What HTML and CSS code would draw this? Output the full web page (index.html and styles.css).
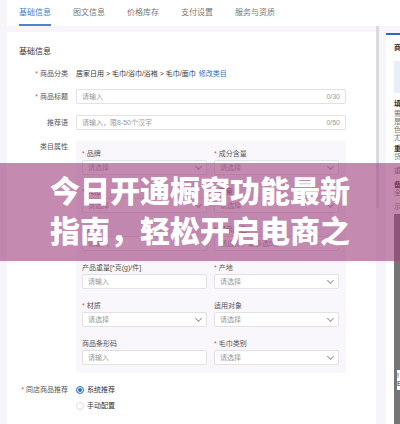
FILE: index.html
```html
<!DOCTYPE html>
<html lang="zh-CN">

<head>
    <meta charset="UTF-8">
    <meta name="viewport" content="width=device-width, initial-scale=1.0">
    <title>基础信息</title>
    <link rel="stylesheet" href="styles.css">
</head>

<body>

    <nav class="tabs">
        <a href="#basic" class="active">基础信息</a>
        <a href="#detail">图文信息</a>
        <a href="#stock">价格库存</a>
        <a href="#payment">支付设置</a>
        <a href="#service">服务与资质</a>
    </nav>

    <div class="main">
        <form class="card" id="basic">
            <h2>基础信息</h2>

            <div class="row category">
                <span class="label required">商品分类</span>
                <p>居家日用 &gt; 毛巾/浴巾/浴袍 &gt; 毛巾/面巾 <a href="#category">修改类目</a></p>
            </div>

            <div class="row">
                <label class="label required" for="title">商品标题</label>
                <div class="control">
                    <input type="text" id="title" placeholder="请输入">
                    <span class="count">0/30</span>
                </div>
            </div>

            <div class="row">
                <label class="label" for="slogan">推荐语</label>
                <div class="control">
                    <input type="text" id="slogan" placeholder="请输入，限8-50个汉字">
                    <span class="count">0/50</span>
                </div>
            </div>

            <div class="row attributes">
                <span class="label">类目属性</span>
                <div class="panel">
                    <div class="field">
                        <label class="required" for="brand">品牌</label>
                        <div class="control select"><select id="brand"><option>请选择</option></select></div>
                    </div>
                    <div class="field">
                        <label class="required" for="content">成分含量</label>
                        <div class="control select"><select id="content"><option>请选择</option></select></div>
                    </div>
                    <div class="field">
                        <label class="required" for="style">风格</label>
                        <div class="control select"><select id="style"><option>请选择</option></select></div>
                    </div>
                    <div class="field">
                        <label class="required" for="pattern">图案</label>
                        <div class="control select"><select id="pattern"><option>请选择</option></select></div>
                    </div>
                    <div class="field">
                        <label class="required" for="size">尺寸</label>
                        <div class="control"><input type="text" id="size" placeholder="请输入"></div>
                    </div>
                    <div class="field">
                        <label class="required" for="color">展示颜色</label>
                        <div class="control"><input type="text" id="color" placeholder="请选择，最多选5项"></div>
                    </div>
                    <div class="field">
                        <label for="weight">产品重量[*克(g)/件]</label>
                        <div class="control"><input type="text" id="weight" placeholder="请输入"></div>
                    </div>
                    <div class="field">
                        <label class="required" for="origin">产地</label>
                        <div class="control select"><select id="origin"><option>请选择</option></select></div>
                    </div>
                    <div class="field">
                        <label class="required" for="material">材质</label>
                        <div class="control select"><select id="material"><option>请选择</option></select></div>
                    </div>
                    <div class="field">
                        <label for="target">适用对象</label>
                        <div class="control select"><select id="target"><option>请选择</option></select></div>
                    </div>
                    <div class="field">
                        <label for="barcode">商品条形码</label>
                        <div class="control"><input type="text" id="barcode" placeholder="请输入"></div>
                    </div>
                    <div class="field">
                        <label class="required" for="kind">毛巾类别</label>
                        <div class="control select"><select id="kind"><option>请选择</option></select></div>
                    </div>
                </div>
            </div>

            <div class="row recommend" role="radiogroup" aria-labelledby="recommend-label">
                <span class="label required" id="recommend-label">同店商品推荐</span>
                <div class="radios">
                    <label><input type="radio" name="recommend" checked>系统推荐</label>
                    <label><input type="radio" name="recommend">手动配置</label>
                </div>
            </div>
        </form>

        <div class="scrollbar"></div>

        <aside class="preview">
            <h3>商品</h3>
            <div class="tip"></div>
            <h4>填写</h4>
            <p>需包<br>是否<br>色彩<br>尤其</p>
            <p class="strong">重要</p>
            <p>货品</p>
            <p class="more">重点</p>
            <p class="strong more">备注</p>
            <p>全部</p>
            <p class="more">示例</p>
            <div class="phone">
                <div class="bubble">!<br>E</div>
            </div>
        </aside>
    </div>

    <div class="banner">
        <h1>今日开通橱窗功能最新指南，轻松开启电商之</h1>
    </div>

</body>

</html>
```

FILE: styles.css
```css
* {
    box-sizing: border-box;
}

body {
    margin: 0;
    min-height: 100vh;
    padding-left: 7px;
    display: flex;
    flex-direction: column;
    overflow: hidden;
    background-color: #f7f5fa;
    color: #555;
    font-family: "Liberation Sans", "Noto Sans CJK SC", sans-serif;
    font-size: 7px;
    line-height: 12px;
}

h1,
h2,
h3,
h4,
p {
    margin: 0;
}

a {
    color: #2a6fc4;
    text-decoration: none;
}

/* Top tabs */
.tabs {
    display: flex;
    gap: 22px;
    height: 26px;
    padding-left: 12px;
    background-color: #fff;
    font-size: 8px;
}

.tabs a {
    height: 26px;
    line-height: 26px;
    white-space: nowrap;
    color: #777;
}

.tabs .active {
    color: #3d7cc9;
    border-bottom: 2px solid #4a84cc;
}

/* Form */
.main {
    display: flex;
    flex: 1;
}

.card {
    flex: 1;
    margin-top: 6px;
    padding: 13px 30px 0 12px;
    background-color: #fff;
}

h2 {
    margin-bottom: 9px;
    color: #333;
    font-size: 8px;
    line-height: 14px;
    font-weight: 400;
}

.row {
    display: flex;
    gap: 8px;
    margin-bottom: 11px;
    line-height: 15px;
}

.label {
    flex: 0 0 49px;
    text-align: right;
    white-space: nowrap;
}

.required::before {
    content: "*";
    margin-right: 2px;
    color: #d0574e;
}

.category {
    margin-bottom: 9px;
    line-height: 12px;
}

.category p {
    white-space: nowrap;
    color: #333;
}

.category a {
    margin-left: 1px;
}

.control {
    display: flex;
    flex: 1;
    align-items: center;
    min-width: 0;
    height: 15px;
    padding: 0 5px;
    background-color: #fff;
    border: 1px solid #e3e1e6;
    border-radius: 2px;
}

.control input,
.control select {
    flex: 1;
    width: 100%;
    min-width: 0;
    height: 13px;
    padding: 0;
    border: none;
    outline: none;
    background: none;
    appearance: none;
    color: #999;
    font: inherit;
}

.control input::placeholder {
    color: #999;
}

.count {
    color: #999;
}

.select::after {
    content: "";
    width: 4px;
    height: 4px;
    margin-bottom: 2px;
    border-right: 1px solid #999;
    border-bottom: 1px solid #999;
    transform: rotate(45deg);
}

/* Category attributes */
.attributes {
    line-height: 12px;
}

.panel {
    display: grid;
    grid-template-columns: 1fr 1fr;
    gap: 11px 7px;
    flex: 1;
    padding: 7px 7px 8px 6px;
    background-color: #f9f7fb;
}

.field label {
    display: block;
}

.radios {
    display: grid;
    gap: 4px;
}

.recommend {
    line-height: 12px;
}

.radios label {
    display: flex;
    align-items: center;
    gap: 3px;
    color: #333;
}

.radios input {
    width: 8px;
    height: 8px;
    margin: 0;
    appearance: none;
    background-color: #fff;
    border: 1px solid #ddd;
    border-radius: 50%;
}

.radios input:checked {
    background-color: #2f6fc0;
    border-color: #4a86cf;
    box-shadow: inset 0 0 0 1px #fff;
}

.scrollbar {
    width: 3px;
    height: 182px;
    background-color: #dcdadf;
}

/* Preview column */
.preview {
    display: flex;
    flex-direction: column;
    flex: 0 0 14px;
    margin: 7px 0 0 7px;
    padding: 9px 0 0 8px;
    overflow: hidden;
    background-color: #fff;
    border-top: 2px solid #2e69b5;
    line-height: 8px;
    white-space: nowrap;
    color: #777;
}

.preview h3,
.preview h4,
.strong {
    font-size: 7px;
    font-weight: 700;
    color: #333;
}

.preview h4 {
    margin-bottom: 2px;
}

.tip {
    height: 32px;
    margin: 9px 0 7px;
    background-color: #e8effb;
}

.strong {
    margin-top: 3px;
}

.preview .more {
    margin-top: 6px;
}

.phone {
    flex: 1;
    margin-top: 3px;
    padding: 156px 0 0 3px;
    background-color: #757575;
}

.bubble {
    height: 20px;
    padding-top: 2px;
    background-color: #fff;
    color: #333;
}

/* Title banner over the page */
.banner {
    position: absolute;
    top: 163px;
    left: 0;
    right: 0;
    padding: 9px 50px;
    background-color: rgba(160, 66, 126, 0.62);
}

h1 {
    color: #fff;
    font-size: 30px;
    font-weight: 900;
    line-height: 40px;
}
```
